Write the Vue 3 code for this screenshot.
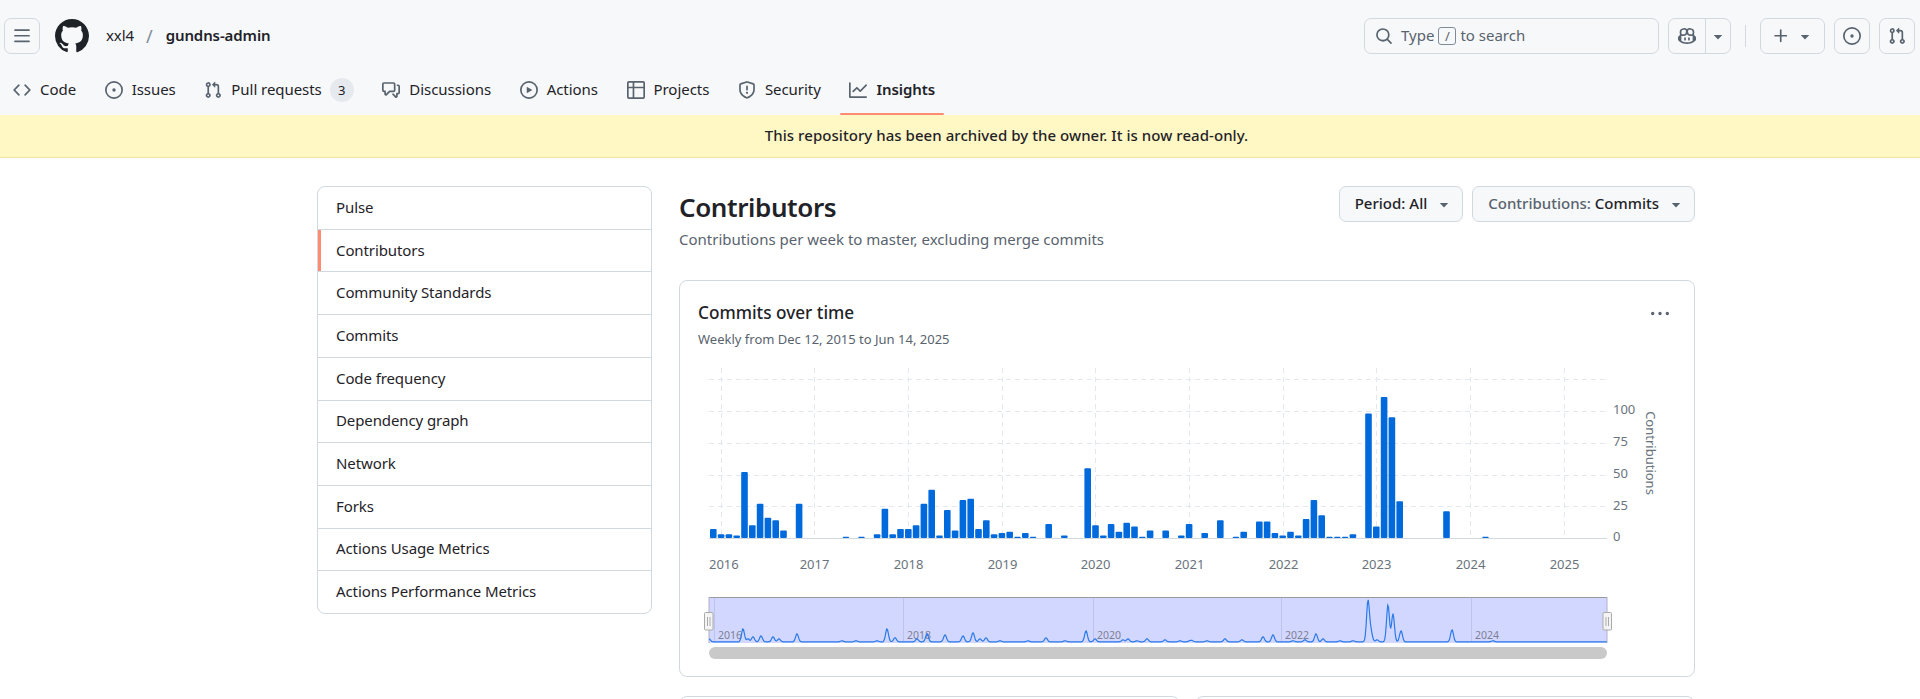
<template>
  <div class="page">
    <header class="topbar">
      <div class="top-row">
        <button class="icon-btn menu-btn">
          <svg class="ico" viewBox="0 0 16 16"><path :d="ICONS.bars" /></svg>
        </button>
        <svg class="logo" viewBox="0 0 16 16"><path :d="ICONS.github" /></svg>
        <span class="crumb">xxl4</span>
        <span class="crumb-sep">/</span>
        <span class="crumb strong">gundns-admin</span>

        <div class="top-actions">
          <div class="search">
            <svg class="ico" viewBox="0 0 16 16"><path :d="ICONS.search" /></svg>
            <span class="search-text">Type</span>
            <kbd class="slash">/</kbd>
            <span class="search-text">to search</span>
          </div>
          <div class="split">
            <span class="split-main"><svg class="ico" viewBox="0 0 16 16"><path :d="ICONS.copilot" /></svg></span>
            <span class="split-caret"><svg class="caret" viewBox="0 0 16 16"><path :d="ICONS.caret" /></svg></span>
          </div>
          <span class="vsep"></span>
          <button class="icon-btn plus-btn">
            <svg class="ico" viewBox="0 0 16 16"><path :d="ICONS.plus" /></svg>
            <svg class="caret" viewBox="0 0 16 16"><path :d="ICONS.caret" /></svg>
          </button>
          <button class="icon-btn"><svg class="ico" viewBox="0 0 16 16"><path :d="ICONS.issue" /></svg></button>
          <button class="icon-btn"><svg class="ico" viewBox="0 0 16 16"><path :d="ICONS.pull" /></svg></button>
        </div>
      </div>

      <nav class="tabs">
        <a v-for="t in tabs" :key="t.label" class="tab" :class="{ active: t.active }">
          <svg class="ico" viewBox="0 0 16 16"><path :d="ICONS[t.icon]" /></svg>
          <span class="tab-label">{{ t.label }}</span>
          <span v-if="t.count" class="counter">{{ t.count }}</span>
        </a>
      </nav>
    </header>

    <div class="banner">This repository has been archived by the owner. It is now read-only.</div>

    <main class="layout">
      <aside class="side">
        <a v-for="s in sideItems" :key="s" class="side-item" :class="{ current: s === 'Contributors' }">{{ s }}</a>
      </aside>

      <section class="content">
        <div class="head">
          <div>
            <h1 class="title">Contributors</h1>
            <p class="sub">Contributions per week to master, excluding merge commits</p>
          </div>
          <div class="filters">
            <button class="btn">Period: All<svg class="caret" viewBox="0 0 16 16"><path :d="ICONS.caret" /></svg></button>
            <button class="btn"><span class="muted">Contributions:&nbsp;</span>Commits<svg class="caret" viewBox="0 0 16 16"><path :d="ICONS.caret" /></svg></button>
          </div>
        </div>

        <div class="card chart-card">
          <div class="card-head">
            <h2 class="card-title">Commits over time</h2>
            <svg class="kebab" viewBox="0 0 16 16"><path :d="ICONS.kebab" /></svg>
          </div>
          <p class="card-sub">Weekly from Dec 12, 2015 to Jun 14, 2025</p>

          <!-- viewBox uses page coordinates so the numbers read off the reference directly -->
          <svg class="chart" viewBox="698 360 968 300" width="968" height="300">
            <g class="grid">
              <line v-for="y in gridY" :key="y" x1="709" x2="1607" :y1="y" :y2="y" />
              <line v-for="t in yearTicks" :key="t.year" :x1="t.x" :x2="t.x" y1="367" y2="537" />
            </g>
            <rect
              v-for="b in bars"
              :key="b.i"
              class="bar"
              :x="b.x"
              :y="b.y"
              width="6.6"
              :height="b.h"
              rx="1"
            />
            <line class="axis" x1="709" x2="1607" y1="537.5" y2="537.5" />

            <text
              v-for="(t, i) in yearTicks"
              :key="'l' + t.year"
              class="lbl"
              :x="i === 0 ? 709 : t.x"
              y="568"
              :text-anchor="i === 0 ? 'start' : 'middle'"
            >{{ t.year }}</text>
            <text v-for="l in yLabels" :key="l.v" class="lbl" x="1613" :y="l.y">{{ l.v }}</text>
            <text class="lbl" transform="translate(1646 452) rotate(90)" text-anchor="middle">Contributions</text>

            <!-- brush -->
            <rect class="brush" x="709" y="596" width="898" height="46" />
            <line class="brush-top" x1="709" x2="1607" y1="596.5" y2="596.5" />
            <line class="brush-edge" x1="709" x2="709" y1="596" y2="642" />
            <line class="brush-edge" x1="1607" x2="1607" y1="596" y2="642" />
            <g v-for="t in brushTicks" :key="t.year">
              <line class="brush-tick" :x1="t.x" :x2="t.x" y1="597" y2="641" />
              <text class="brush-lbl" :x="t.x + 3.5" y="638">{{ t.year }}</text>
            </g>
            <path class="spark" :d="sparkPath" />
            <g v-for="x in [708.5, 1607]" :key="x">
              <rect class="handle" :x="x - 4" y="611.5" width="8.5" height="17.5" rx="1" />
              <line class="handle-grip" :x1="x - 1" :x2="x - 1" y1="616" y2="625" />
              <line class="handle-grip" :x1="x + 1.5" :x2="x + 1.5" y1="616" y2="625" />
            </g>
            <rect class="scroll" x="709" y="646" width="898" height="12" rx="6" />
          </svg>
        </div>

        <div class="lower">
          <div class="card stub"></div>
          <div class="card stub"></div>
        </div>
      </section>
    </main>
  </div>
</template>

<script setup>
import { computed } from 'vue'

const ICONS = {
  bars: 'M1 2.75A.75.75 0 0 1 1.75 2h12.5a.75.75 0 0 1 0 1.5H1.75A.75.75 0 0 1 1 2.75Zm0 5A.75.75 0 0 1 1.75 7h12.5a.75.75 0 0 1 0 1.5H1.75A.75.75 0 0 1 1 7.75ZM1.75 12h12.5a.75.75 0 0 1 0 1.5H1.75a.75.75 0 0 1 0-1.5Z',
  github: 'M8 0c4.42 0 8 3.58 8 8a8.013 8.013 0 0 1-5.45 7.59c-.4.08-.55-.17-.55-.38 0-.27.01-1.13.01-2.2 0-.75-.25-1.23-.54-1.48 1.78-.2 3.65-.88 3.65-3.95 0-.88-.31-1.59-.82-2.15.08-.2.36-1.02-.08-2.12 0 0-.67-.22-2.2.82-.64-.18-1.32-.27-2-.27-.68 0-1.36.09-2 .27-1.53-1.03-2.2-.82-2.2-.82-.44 1.1-.16 1.92-.08 2.12-.51.56-.82 1.28-.82 2.15 0 3.06 1.86 3.75 3.64 3.95-.23.2-.44.55-.51 1.07-.46.21-1.61.55-2.33-.66-.15-.24-.6-.83-1.23-.82-.67.01-.27.38.01.53.34.19.73.9.82 1.13.16.45.68 1.31 2.69.94 0 .67.01 1.3.01 1.49 0 .21-.15.45-.55.37A7.995 7.995 0 0 1 0 8c0-4.42 3.58-8 8-8Z',
  code: 'm11.28 3.22 4.25 4.25a.75.75 0 0 1 0 1.06l-4.25 4.25a.749.749 0 0 1-1.275-.326.749.749 0 0 1 .215-.734L13.94 8l-3.72-3.72a.749.749 0 0 1 .326-1.275.749.749 0 0 1 .734.215Zm-6.56 0a.751.751 0 0 1 1.042.018.751.751 0 0 1 .018 1.042L2.06 8l3.72 3.72a.749.749 0 0 1-.326 1.275.749.749 0 0 1-.734-.215L.47 8.53a.75.75 0 0 1 0-1.06Z',
  issue: 'M8 9.5a1.5 1.5 0 1 0 0-3 1.5 1.5 0 0 0 0 3Z M8 0a8 8 0 1 1 0 16A8 8 0 0 1 8 0ZM1.5 8a6.5 6.5 0 1 0 13 0 6.5 6.5 0 0 0-13 0Z',
  pull: 'M1.5 3.25a2.25 2.25 0 1 1 3 2.122v5.256a2.251 2.251 0 1 1-1.5 0V5.372A2.25 2.25 0 0 1 1.5 3.25Zm5.677-.177L9.573.677A.25.25 0 0 1 10 .854V2.5h1A2.5 2.5 0 0 1 13.5 5v5.628a2.251 2.251 0 1 1-1.5 0V5a1 1 0 0 0-1-1h-1v1.646a.25.25 0 0 1-.427.177L7.177 3.427a.25.25 0 0 1 0-.354ZM3.75 2.5a.75.75 0 1 0 0 1.5.75.75 0 0 0 0-1.5Zm0 9.5a.75.75 0 1 0 0 1.5.75.75 0 0 0 0-1.5Zm8.25.75a.75.75 0 1 0 1.5 0 .75.75 0 0 0-1.5 0Z',
  discussion: 'M1.75 1h8.5c.966 0 1.75.784 1.75 1.75v5.5A1.75 1.75 0 0 1 10.25 10H7.061l-2.574 2.573A1.458 1.458 0 0 1 2 11.543V10h-.25A1.75 1.75 0 0 1 0 8.25v-5.5C0 1.784.784 1 1.75 1ZM1.5 2.75v5.5c0 .138.112.25.25.25h1a.75.75 0 0 1 .75.75v2.19l2.72-2.72a.749.749 0 0 1 .53-.22h3.5a.25.25 0 0 0 .25-.25v-5.5a.25.25 0 0 0-.25-.25h-8.5a.25.25 0 0 0-.25.25Zm13 2a.25.25 0 0 0-.25-.25h-.5a.75.75 0 0 1 0-1.5h.5c.966 0 1.75.784 1.75 1.75v5.5A1.75 1.75 0 0 1 14.25 12H14v1.543a1.458 1.458 0 0 1-2.487 1.03L9.22 12.28a.749.749 0 0 1 .326-1.275.749.749 0 0 1 .734.215l2.22 2.22v-2.19a.75.75 0 0 1 .75-.75h1a.25.25 0 0 0 .25-.25Z',
  play: 'M8 0a8 8 0 1 1 0 16A8 8 0 0 1 8 0ZM1.5 8a6.5 6.5 0 1 0 13 0 6.5 6.5 0 0 0-13 0Zm4.879-2.773 4.264 2.559a.25.25 0 0 1 0 .428l-4.264 2.559A.25.25 0 0 1 6 10.559V5.442a.25.25 0 0 1 .379-.215Z',
  table: 'M0 1.75C0 .784.784 0 1.75 0h12.5C15.216 0 16 .784 16 1.75v12.5A1.75 1.75 0 0 1 14.25 16H1.75A1.75 1.75 0 0 1 0 14.25ZM6.5 6.5v8h7.75a.25.25 0 0 0 .25-.25V6.5Zm8-1.5V1.75a.25.25 0 0 0-.25-.25H6.5V5Zm-13 1.5v7.75c0 .138.112.25.25.25H5v-8ZM5 5V1.5H1.75a.25.25 0 0 0-.25.25V5Z',
  shield: 'M7.467.133a1.748 1.748 0 0 1 1.066 0l5.25 1.68A1.75 1.75 0 0 1 15 3.48V7c0 1.566-.32 3.182-1.303 4.682-.983 1.498-2.585 2.813-5.032 3.855a1.697 1.697 0 0 1-1.33 0c-2.447-1.042-4.049-2.357-5.032-3.855C1.32 10.182 1 8.566 1 7V3.48a1.75 1.75 0 0 1 1.217-1.667Zm.61 1.429a.25.25 0 0 0-.153 0l-5.25 1.68a.25.25 0 0 0-.174.238V7c0 1.358.275 2.666 1.057 3.86.784 1.194 2.121 2.34 4.366 3.297a.196.196 0 0 0 .154 0c2.245-.956 3.582-2.104 4.366-3.298C13.225 9.666 13.5 8.36 13.5 7V3.48a.251.251 0 0 0-.174-.237l-5.25-1.68ZM8.75 4.75v3a.75.75 0 0 1-1.5 0v-3a.75.75 0 0 1 1.5 0ZM9 10.5a1 1 0 1 1-2 0 1 1 0 0 1 2 0Z',
  graph: 'M1.5 1.75V13.5h13.75a.75.75 0 0 1 0 1.5H.75a.75.75 0 0 1-.75-.75V1.75a.75.75 0 0 1 1.5 0Zm14.28 2.53-5.25 5.25a.75.75 0 0 1-1.06 0L7 7.06 4.28 9.78a.751.751 0 0 1-1.042-.018.751.751 0 0 1-.018-1.042l3.25-3.25a.75.75 0 0 1 1.06 0L10 7.94l4.72-4.72a.751.751 0 0 1 1.042.018.751.751 0 0 1 .018 1.042Z',
  search: 'M10.68 11.74a6 6 0 0 1-7.922-8.982 6 6 0 0 1 8.982 7.922l3.04 3.04a.749.749 0 0 1-.326 1.275.749.749 0 0 1-.734-.215ZM11.5 7a4.499 4.499 0 1 0-8.997 0A4.499 4.499 0 0 0 11.5 7Z',
  plus: 'M7.75 2a.75.75 0 0 1 .75.75V7h4.25a.75.75 0 0 1 0 1.5H8.5v4.25a.75.75 0 0 1-1.5 0V8.5H2.75a.75.75 0 0 1 0-1.5H7V2.75A.75.75 0 0 1 7.75 2Z',
  caret: 'm4.427 7.427 3.396 3.396a.25.25 0 0 0 .354 0l3.396-3.396A.25.25 0 0 0 11.396 7H4.604a.25.25 0 0 0-.177.427Z',
  kebab: 'M8 9a1.5 1.5 0 1 0 0-3 1.5 1.5 0 0 0 0 3ZM1.5 9a1.5 1.5 0 1 0 0-3 1.5 1.5 0 0 0 0 3Zm13 0a1.5 1.5 0 1 0 0-3 1.5 1.5 0 0 0 0 3Z',
  copilot: 'M7.998 15.035c-4.562 0-7.873-2.914-7.998-3.749V9.338c.085-.628.677-1.686 1.588-2.065.013-.07.024-.143.036-.218.029-.183.06-.384.126-.612-.201-.508-.254-1.084-.254-1.656 0-.87.128-1.769.693-2.484.579-.733 1.494-1.124 2.724-1.261 1.206-.134 2.262.034 2.944.765.05.053.096.108.139.165.044-.057.094-.112.143-.165.682-.731 1.738-.899 2.944-.765 1.23.137 2.145.528 2.724 1.261.566.715.693 1.614.693 2.484 0 .572-.053 1.148-.254 1.656.066.228.098.429.126.612.012.076.024.148.037.218.924.385 1.522 1.471 1.591 2.095v1.872c0 .766-3.351 3.795-8.002 3.795Zm0-1.485c2.28 0 4.584-1.11 5.002-1.433V7.862l-.023-.116c-.49.21-1.075.291-1.727.291-1.146 0-2.059-.327-2.71-.991A3.222 3.222 0 0 1 8 6.303a3.24 3.24 0 0 1-.544.743c-.65.664-1.563.991-2.71.991-.652 0-1.236-.081-1.727-.291l-.023.116v4.255c.419.323 2.722 1.433 5.002 1.433ZM6.762 2.83c-.193-.206-.637-.413-1.682-.297-1.019.113-1.479.404-1.713.7-.247.312-.369.789-.369 1.554 0 .793.129 1.171.308 1.371.162.181.519.379 1.442.379.853 0 1.339-.235 1.638-.54.315-.322.527-.827.617-1.553.117-.935-.037-1.395-.241-1.614Zm4.155-.297c-1.044-.116-1.488.091-1.681.297-.204.219-.359.679-.242 1.614.091.726.303 1.231.618 1.553.299.305.784.54 1.638.54.922 0 1.28-.198 1.442-.379.179-.2.308-.578.308-1.371 0-.765-.123-1.242-.37-1.554-.233-.296-.693-.587-1.713-.7Z M6.25 9.037a.75.75 0 0 1 .75.75v1.501a.75.75 0 0 1-1.5 0V9.787a.75.75 0 0 1 .75-.75Zm4.25.75v1.501a.75.75 0 0 1-1.5 0V9.787a.75.75 0 0 1 1.5 0Z',
}

const tabs = [
  { label: 'Code', icon: 'code' },
  { label: 'Issues', icon: 'issue' },
  { label: 'Pull requests', icon: 'pull', count: 3 },
  { label: 'Discussions', icon: 'discussion' },
  { label: 'Actions', icon: 'play' },
  { label: 'Projects', icon: 'table' },
  { label: 'Security', icon: 'shield' },
  { label: 'Insights', icon: 'graph', active: true },
]

const sideItems = [
  'Pulse', 'Contributors', 'Community Standards', 'Commits', 'Code frequency',
  'Dependency graph', 'Network', 'Forks', 'Actions Usage Metrics', 'Actions Performance Metrics',
]

const gridY = [378.5, 410.5, 442.5, 474.5, 505.5]
const yLabels = [
  { v: 100, y: 413 }, { v: 75, y: 445 }, { v: 50, y: 477 }, { v: 25, y: 509 }, { v: 0, y: 540 },
]
const yearTicks = [
  { year: 2016, x: 721.5 }, { year: 2017, x: 814.5 }, { year: 2018, x: 908.5 }, { year: 2019, x: 1002.5 },
  { year: 2020, x: 1095.5 }, { year: 2021, x: 1189.5 }, { year: 2022, x: 1283.5 }, { year: 2023, x: 1376.5 },
  { year: 2024, x: 1470.5 }, { year: 2025, x: 1564.5 },
]
const brushTicks = [
  { year: 2016, x: 714.5 }, { year: 2018, x: 903.5 }, { year: 2020, x: 1093.5 }, { year: 2022, x: 1281.5 }, { year: 2024, x: 1471.5 },
]

// [month index, commits]
const MONTHLY = [
  [0, 7], [1, 3], [2, 3], [3, 2], [4, 52], [5, 10], [6, 27], [7, 16], [8, 14], [9, 6], [11, 27],
  [17, 1], [19, 1], [21, 3], [22, 23], [23, 3], [24, 7], [25, 7], [26, 10], [27, 27], [28, 38],
  [29, 2], [30, 22], [31, 6], [32, 30], [33, 31], [34, 7], [35, 14], [36, 3], [37, 4], [38, 5],
  [39, 1], [40, 4], [41, 1], [43, 11], [45, 2], [48, 55], [49, 10], [50, 2], [51, 11], [52, 5],
  [53, 12], [54, 9], [55, 1], [56, 6], [58, 6], [60, 2], [61, 11], [63, 4], [65, 14], [67, 1],
  [68, 5], [70, 13], [71, 13], [72, 4], [73, 2], [74, 5], [75, 2], [76, 15], [77, 30], [78, 18],
  [79, 1], [80, 1], [81, 1], [82, 3], [84, 98], [85, 9], [86, 111], [87, 95], [88, 29], [94, 21], [99, 1],
]
const bars = MONTHLY.map(([i, v]) => {
  const h = v * 1.27
  return { i, x: 710 + i * 7.8, y: 537 - h, h }
})

// Weekly peaks of the overview line: [x, height]
const PEAKS = [
  [709, 3], [743, 13], [748, 3], [753, 5], [761, 6], [773, 5], [779, 3], [797, 8], [842, 1], [856, 1], [877, 1], [887, 13],
  [895, 4], [917, 3], [927, 8], [945, 7], [963, 6], [973, 9], [980, 3], [986, 4], [1000, 1], [1028, 1], [1046, 4], [1065, 1],
  [1086, 11], [1095, 3], [1123, 2], [1128, 3], [1137, 1], [1147, 3], [1165, 2], [1180, 1], [1190, 1], [1192, 1], [1207, 1],
  [1225, 3], [1242, 2], [1263, 5], [1273, 7], [1293, 1], [1305, 2], [1316, 8], [1323, 3], [1340, 1], [1353, 1], [1368, 41],
  [1371, 10], [1377, 2], [1388, 37], [1393, 28], [1401, 11], [1452, 12], [1493, 1],
]
const sparkPath = computed(() => {
  const pts = []
  for (let x = 709; x <= 1607; x += 0.75) {
    let h = 0
    for (const [px, ph] of PEAKS) h += ph * Math.exp(-((x - px) ** 2) / 4)
    pts.push(`${x} ${(640.8 - Math.min(h, 42)).toFixed(1)}`)
  }
  return 'M' + pts.join('L')
})
</script>

<style scoped>
.page {
  width: 1920px; height: 699px; overflow: hidden; background: #fff;
  font-family: "Noto Sans", "Open Sans", sans-serif; color: #1f2328; font-size: 15px;
}
button { font-family: inherit; }

.topbar { background: #f6f8fa; height: 115px; }
.top-row { display: flex; align-items: center; height: 72px; padding-left: 4px; }
.ico { width: 18px; height: 18px; fill: #59636e; flex-shrink: 0; display: block; }
.caret { width: 18px; height: 18px; fill: #59636e; flex-shrink: 0; display: block; }
.logo { width: 34px; height: 34px; fill: #1f2328; margin: 0 17px 0 15px; }
.icon-btn {
  width: 36px; height: 36px; border: 1px solid #d1d9e0; border-radius: 7px; background: #f6f8fa;
  display: flex; align-items: center; justify-content: center; padding: 0;
}
.crumb { font-size: 15px; letter-spacing: -0.1px; padding-bottom: 2px; }
.crumb.strong { font-weight: 600; }
.crumb-sep { color: #818b98; margin: 0 13px 0 12px; font-size: 18px; }

.top-actions { margin-left: auto; display: flex; align-items: center; padding-right: 5px; }
.search {
  width: 295px; height: 36px; border: 1px solid #d1d9e0; border-radius: 7px; box-sizing: border-box;
  display: flex; align-items: center; padding-left: 10px; color: #59636e; margin-right: 9px;
}
.search-text { font-size: 15px; padding-bottom: 2px; }
.search .ico { margin-right: 8px; }
.slash {
  width: 18px; height: 18px; border: 1px solid #818b98; border-radius: 3px; margin: 0 4px;
  display: inline-flex; align-items: center; justify-content: center; font: inherit; font-size: 13px; box-sizing: border-box;
}
.split { display: flex; height: 36px; width: 63px; border: 1px solid #d1d9e0; border-radius: 7px; box-sizing: border-box; }
.split-main { width: 36px; display: flex; align-items: center; justify-content: center; border-right: 1px solid #d1d9e0; }
.split-caret { flex: 1; display: flex; align-items: center; justify-content: center; }
.vsep { width: 1px; height: 22px; background: #d1d9e0; margin: 0 14px 0 14px; }
.plus-btn { width: 65px; gap: 6px; margin-right: 9px; }
.top-actions .icon-btn + .icon-btn { margin-right: 9px; }
.top-actions .icon-btn:last-child { margin-right: 0; }

.tabs { display: flex; height: 43px; padding-left: 4px; align-items: stretch; }
.tab {
  display: flex; align-items: center; gap: 9px; padding: 0 9px 7px; margin-right: 10.6px; position: relative;
  font-size: 15px; color: #1f2328; box-sizing: border-box;
}
.tab-label { padding-bottom: 2px; letter-spacing: -0.05px; }
.tab.active { font-weight: 600; letter-spacing: -0.2px; }
.tab.active::after {
  content: ""; position: absolute; left: 0; right: 0; bottom: 0; height: 2px; background: #fd8c73; border-radius: 1px;
}
.counter {
  width: 24px; height: 24px; border-radius: 12px; background: #e6eaef; font-size: 13px;
  display: flex; align-items: center; justify-content: center; margin-left: -1px;
}

.banner {
  height: 43px; box-sizing: border-box; background: #fff8c5; border-bottom: 1px solid #ebe3a4; padding: 0 0 2px 93px;
  display: flex; align-items: center; justify-content: center; font-size: 15px; font-weight: 500; letter-spacing: 0.05px;
}

.layout { display: grid; grid-template-columns: 335px 1016px; column-gap: 27px; margin: 28px 0 0 317px; }

.side {
  height: 428px; border: 1px solid #d1d9e0; border-radius: 8px; box-sizing: border-box;
  display: flex; flex-direction: column; overflow: hidden;
}
.side-item {
  flex: 1; display: flex; align-items: center; padding: 0 0 2px 18px; border-top: 1px solid #d1d9e0;
  font-size: 15px; letter-spacing: -0.1px; position: relative;
}
.side-item:first-child { border-top: none; }
.side-item.current::before { content: ""; position: absolute; left: 0; top: 0; bottom: 0; width: 3px; background: #fd8c73; }

.head { display: flex; justify-content: space-between; height: 94px; }
.title { margin: 3px 0 3px; font-size: 26px; letter-spacing: -0.4px; line-height: 36px; font-weight: 600; }
.sub { margin: 0; font-size: 15px; line-height: 22px; color: #59636e; }
.filters { display: flex; gap: 9px; align-items: flex-start; }
.btn {
  height: 36px; border: 1px solid #d1d9e0; border-radius: 7px; background: #f6f8fa; padding: 0 9px 2px 15px;
  display: flex; align-items: center; font-size: 15px; font-weight: 500; color: #1f2328;
}
.btn .caret { margin: 2px 0 0 8px; }
.muted { color: #59636e; }

.card { border: 1px solid #d1d9e0; border-radius: 8px; box-sizing: border-box; background: #fff; }
.chart-card { height: 397px; padding: 20px 18px 0; }
.card-head { display: flex; justify-content: space-between; align-items: center; height: 24px; }
.card-title { margin: 0; font-size: 17.2px; font-weight: 500; line-height: 24px; }
.kebab { width: 18px; height: 18px; fill: #59636e; margin: 1px 7px 0 0; }
.card-sub { margin: 4px 0 12px; font-size: 13px; line-height: 20px; color: #59636e; }
.chart { display: block; }
.grid line { stroke: #e3e8ee; stroke-dasharray: 5 4; stroke-width: 1; }
.bar { fill: #006adc; }
.axis { stroke: #d1d9e0; }
.lbl { font-size: 13px; fill: #6a737d; font-family: "Noto Sans", sans-serif; }
.brush { fill: #d2d7ff; }
.brush-top { stroke: #9a9a9a; }
.brush-edge { stroke: #b0b0c8; }
.brush-tick { stroke: #bcc3ee; }
.brush-lbl { font-size: 10.5px; fill: #7d7f94; font-family: "Noto Sans", sans-serif; }
.spark { fill: none; stroke: #2a7ae8; stroke-width: 1.2; }
.handle { fill: #f4f4f4; stroke: #aaa; }
.handle-grip { stroke: #aaa; }
.scroll { fill: #c9c9c9; }

.lower { display: grid; grid-template-columns: 501px 500px; column-gap: 15px; margin-top: 19px; }
.stub { height: 200px; }
</style>
<style>
html, body { margin: 0; background: #fff; }
</style>
